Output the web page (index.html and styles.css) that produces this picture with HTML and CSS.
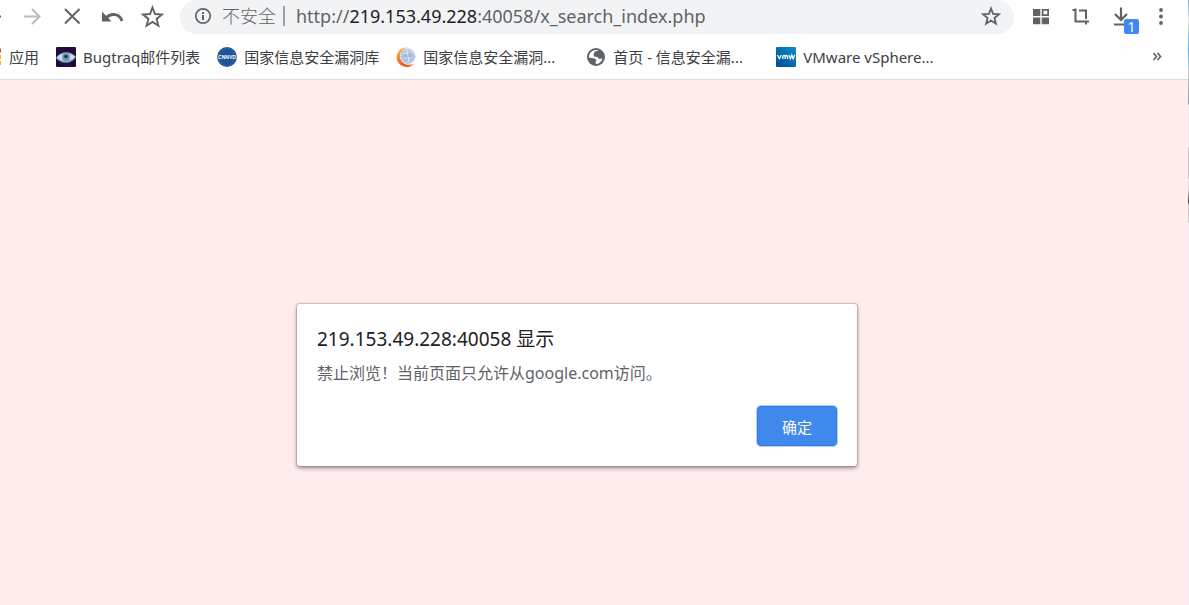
FILE: index.html
```html
<!DOCTYPE html>
<html lang="zh-CN">

<head>
    <meta charset="UTF-8">
    <meta name="viewport" content="width=device-width, initial-scale=1.0">
    <title>219.153.49.228:40058/x_search_index.php</title>
    <link rel="stylesheet" href="styles.css">
</head>

<body>
    <div class="browser">
        <header class="toolbar">
            <div class="nav-buttons">
                <button class="tool-btn back-btn" aria-label="后退">
                    <svg width="4" height="20" viewBox="0 0 4 20"><path d="M0 9.5h1" stroke="#5f6368" stroke-width="2"/></svg>
                </button>
                <button class="tool-btn" aria-label="前进">
                    <svg width="20" height="20" viewBox="0 0 20 20" fill="none" stroke="#babcbe" stroke-width="2"><path d="M2 9.500h15M10 2l7.500 7.500-7.500 7.500"/></svg>
                </button>
                <button class="tool-btn" aria-label="停止">
                    <svg width="20" height="20" viewBox="0 0 20 20" fill="none" stroke="#5f6368" stroke-width="2"><path d="M3 2l14.500 14.500M17.500 2L3 16.500"/></svg>
                </button>
                <button class="tool-btn" aria-label="撤销">
                    <svg width="24" height="20" viewBox="0 0 24 20"><path d="M2 4.500v10h9.500z" fill="#5f6368"/><path d="M6 11C11 5.500 19.500 6.500 22 14" fill="none" stroke="#5f6368" stroke-width="2.800"/></svg>
                </button>
                <button class="tool-btn" aria-label="收藏">
                    <svg width="24" height="24" viewBox="0 0 24 24" fill="none" stroke="#5f6368" stroke-width="1.900"><path d="M12.500 2.500l2.500 6.500 7 .5-5.400 4.400 1.800 6.800-5.900-3.800-5.900 3.800 1.800-6.800L3 9.500l7-.5z"/></svg>
                </button>
            </div>
            <div class="address">
                <svg class="info-icon" width="18" height="18" viewBox="0 0 18 18"><circle cx="9" cy="9" r="7.200" fill="none" stroke="#5f6368" stroke-width="1.700"/><path d="M8 8h2v5H8zM8 5h2v2H8z" fill="#5f6368"/></svg>
                <span class="unsafe">不安全</span>
                <span class="separator"></span>
                <span class="url">http://<span class="host">219.153.49.228</span>:40058/x_search_index.php</span>
                <button class="bookmark-btn" aria-label="为此页添加书签">
                    <svg width="20" height="20" viewBox="0 0 24 24" fill="none" stroke="#5f6368" stroke-width="2.200"><path d="M12 3l2.500 6.500 7 .5-5.400 4.400 1.800 6.800L12 17.400l-5.900 3.800 1.800-6.800L2.500 10l7-.5z"/></svg>
                </button>
            </div>
            <div class="extensions">
                <button class="tool-btn" aria-label="扩展">
                    <svg width="18" height="18" viewBox="0 0 18 18" fill="#5f6368"><path d="M1 1h7.300v7H1zM1 9.500h7.300v6.700H1zM9.700 9.500H17v6.700H9.700z"/><path d="M10.600 1.900h5.500v5.200h-5.500z" fill="none" stroke="#5f6368" stroke-width="1.800"/></svg>
                </button>
                <button class="tool-btn" aria-label="截图">
                    <svg width="20" height="20" viewBox="0 0 20 20" fill="none" stroke="#5f6368" stroke-width="2"><path d="M1.500 3H4.500V14.500H18M4.500 1.500V14.500M8 3.500h7V12M15 14v3.500"/></svg>
                </button>
                <button class="tool-btn download-btn" aria-label="下载">
                    <svg width="20" height="20" viewBox="0 0 20 20" fill="none" stroke="#5f6368" stroke-width="2.200"><path d="M10 .5v12M4 7l6 6 6-6M3 17.500h10"/></svg>
                    <span class="badge">1</span>
                </button>
                <button class="tool-btn" aria-label="菜单">
                    <svg width="6" height="20" viewBox="0 0 6 20" fill="#5f6368"><circle cx="3" cy="3" r="1.900"/><circle cx="3" cy="9.500" r="1.900"/><circle cx="3" cy="16" r="1.900"/></svg>
                </button>
            </div>
        </header>

        <nav class="bookmarks">
            <a href="#" class="bookmark apps">
                <svg width="2" height="20" viewBox="0 0 2 20"><path d="M0 1.500h1v4H0z" fill="#ea4335"/><path d="M0 8h1v4H0zM0 14h1v4H0z" fill="#fbbc05"/></svg>
                <span>应用</span>
            </a>
            <a href="#" class="bookmark">
                <svg width="20" height="20" viewBox="0 0 20 20"><rect width="20" height="20" rx="1" fill="#250b3d"/><path d="M0 11C4 4 15 3 20 10C16 17 5 18 0 11z" fill="#7fa9bd"/><path d="M1 10.500C6 5 14 5 19 10C14 15 6 15 1 10.500z" fill="#c9e0e8"/><circle cx="10" cy="10" r="4" fill="#6c9bb2"/><circle cx="10" cy="9.500" r="1.700" fill="#173447"/></svg>
                <span>Bugtraq邮件列表</span>
            </a>
            <a href="#" class="bookmark">
                <svg width="20" height="20" viewBox="0 0 20 20"><circle cx="10" cy="10" r="9.900" fill="#1c5597"/><circle cx="10" cy="10" r="8.300" fill="none" stroke="#4b7eb4" stroke-width="1" stroke-dasharray="1 1"/><text x="10" y="12" text-anchor="middle" class="logo-text">CNNVD</text></svg>
                <span>国家信息安全漏洞库</span>
            </a>
            <a href="#" class="bookmark">
                <svg width="20" height="20" viewBox="0 0 20 20">
                    <defs>
                        <linearGradient id="ring" x1="0" y1="0" x2="0" y2="1"><stop offset="0" stop-color="#f7bd4b"/><stop offset="1" stop-color="#ef541b"/></linearGradient>
                        <radialGradient id="ball"><stop offset="0" stop-color="#8da9d6"/><stop offset="1" stop-color="#c5d1e9"/></radialGradient>
                    </defs>
                    <path d="M12 .5A9.800 9.800 0 1 0 18 16.500C12 20 4 16 4 9.500C4 5 8 1.500 12 .5z" fill="url(#ring)"/>
                    <circle cx="11.800" cy="9.200" r="7.700" fill="url(#ball)"/>
                    <path d="M7 7c3-2 4 1 6-2s4 0 4 2M8 12c2-3 4 1 8-2M11 3l2 12" fill="none" stroke="#e5ecf7" stroke-width="1"/>
                </svg>
                <span class="clipped">国家信息安全漏洞...</span>
            </a>
            <a href="#" class="bookmark">
                <svg width="20" height="20" viewBox="0 0 20 20"><circle cx="10" cy="10" r="9" fill="#5f6368"/><path d="M13 3.500L9 4.500 7.500 7 8 9.500l3.500.5 1.500 2 3.500-.5C15.500 15 13 17 10 17l-.5-2 1-2L8.500 11.500 3 10.500C2.500 5.500 8 1.500 13 3.500z" fill="#fff"/></svg>
                <span class="clipped">首页 - 信息安全漏...</span>
            </a>
            <a href="#" class="bookmark">
                <svg width="20" height="20" viewBox="0 0 20 20"><defs><linearGradient id="vm" x1="1" y1="0" x2="0" y2="1"><stop offset="0" stop-color="#0b8fcc"/><stop offset="1" stop-color="#034a94"/></linearGradient></defs><rect width="20" height="20" rx="1" fill="url(#vm)"/><path d="M1.500 8l1.900 3.700L5.300 8M6.800 12V9.500q1.200-2 2.400 0V12V9.500q1.200-2 2.400 0V12M13 8l1.400 3.700L15.800 8l1.300 3.700L18.700 8" fill="none" stroke="#fff" stroke-width="1.300"/></svg>
                <span>VMware vSphere...</span>
            </a>
            <button class="more-btn" aria-label="更多书签">
                <svg width="10" height="10" viewBox="0 0 10 10" fill="none" stroke="#5f6368" stroke-width="1.700"><path d="M1.500 1L4.500 4.500l-3 3.500M5.500 1L8.500 4.500l-3 3.500"/></svg>
            </button>
        </nav>

        <main class="page">
            <div class="dialog" role="alertdialog" aria-labelledby="dialogTitle" aria-describedby="dialogText">
                <h1 id="dialogTitle">219.153.49.228:40058 显示</h1>
                <p id="dialogText">禁止浏览！当前页面只允许从google.com访问。</p>
                <div class="actions">
                    <button class="ok-btn">确定</button>
                </div>
            </div>
        </main>
    </div>
    <div class="desktop-edge"></div>
</body>

</html>
```
FILE: styles.css
```css
* {
    box-sizing: border-box;
}

body {
    margin: 0;
    display: flex;
    min-height: 100vh;
    font-family: "Noto Sans", "Noto Sans CJK SC", sans-serif;
    font-size: 15px;
    color: #3c4043;
    background: #fff;
}

button {
    border: none;
    padding: 0;
    background: none;
    font: inherit;
    cursor: pointer;
}

svg {
    display: block;
    flex-shrink: 0;
}

.browser {
    flex: 1;
    min-width: 0;
    display: flex;
    flex-direction: column;
}

.toolbar {
    display: flex;
    height: 34px;
    padding-right: 7px;
}

.nav-buttons,
.extensions {
    display: flex;
}

.tool-btn {
    width: 40px;
    height: 33px;
    display: flex;
    align-items: center;
    justify-content: center;
}

.back-btn {
    width: 12px;
    justify-content: flex-start;
}

.address {
    flex: 1;
    min-width: 0;
    display: flex;
    align-items: center;
    margin: 0 7px 0 8px;
    padding: 0 13px 2px 14px;
    border-radius: 17px;
    background: #f1f3f4;
    font-size: 18px;
    line-height: 24px;
    color: #5f6368;
    white-space: nowrap;
}

.unsafe {
    margin-left: 10px;
    font-weight: 300;
}

.separator {
    width: 2px;
    height: 20px;
    margin: 0 11px 0 7px;
    background: #9aa0a6;
}

.url {
    flex: 1;
    overflow: hidden;
}

.host {
    color: #202124;
}

.download-btn {
    position: relative;
}

.badge {
    position: absolute;
    right: 2px;
    bottom: -1px;
    width: 15px;
    height: 15px;
    border-radius: 2px;
    background: #4285f4;
    color: #fff;
    font-size: 14px;
    line-height: 15px;
    text-align: center;
}

.bookmarks {
    display: flex;
    align-items: center;
    gap: 17px;
    height: 46px;
    padding-right: 26px;
    border-bottom: 1px solid #dadce0;
    white-space: nowrap;
}

.bookmark {
    display: flex;
    align-items: center;
    gap: 7px;
    line-height: 20px;
    color: #3c4043;
    text-decoration: none;
}

.clipped {
    width: 146px;
}

.logo-text {
    font-family: "Liberation Sans", sans-serif;
    font-size: 5px;
    font-weight: bold;
    fill: #fff;
}

.more-btn {
    margin-left: auto;
}

.page {
    flex: 1;
    display: flex;
    justify-content: center;
    align-items: flex-start;
    padding: 224px 34px 40px 0;
    background: #ffeded;
}

.dialog {
    width: 560px;
    padding: 20px;
    border-radius: 3px;
    background: #fff;
    box-shadow: 0 0 1px 1px rgba(90, 70, 70, 0.25), 0 2px 4px rgba(60, 40, 40, 0.5);
}

.dialog h1 {
    margin: 0;
    font-size: 19px;
    font-weight: normal;
    line-height: 30px;
    color: #202124;
}

.dialog p {
    margin: 6px 0 20px;
    font-size: 16px;
    line-height: 26px;
    color: #5f6368;
}

.actions {
    display: flex;
    justify-content: flex-end;
}

.ok-btn {
    width: 80px;
    height: 40px;
    border: 1px solid #2f7de9;
    border-radius: 4px;
    background: #4089ec;
    box-shadow: 0 0 0 1px #b5d1f8;
    color: #fff;
}

/* thin strip of the desktop beside the window */
.desktop-edge {
    width: 1px;
    background: linear-gradient(#7aa7cc 0, #e8e8e8 20px, #5ea9e0 50px, #c5ced8 70px, #8b9bae 104px, #eeecea 105px, #eeecea 147px, #c9c6ca 148px, #c9c6ca 178px, #eeecea 179px, #d5d2d8 190px, #3a3a48 202px, #c9c6d0 205px, #c9c6d0 222px, #f0eeee 223px);
}
```
